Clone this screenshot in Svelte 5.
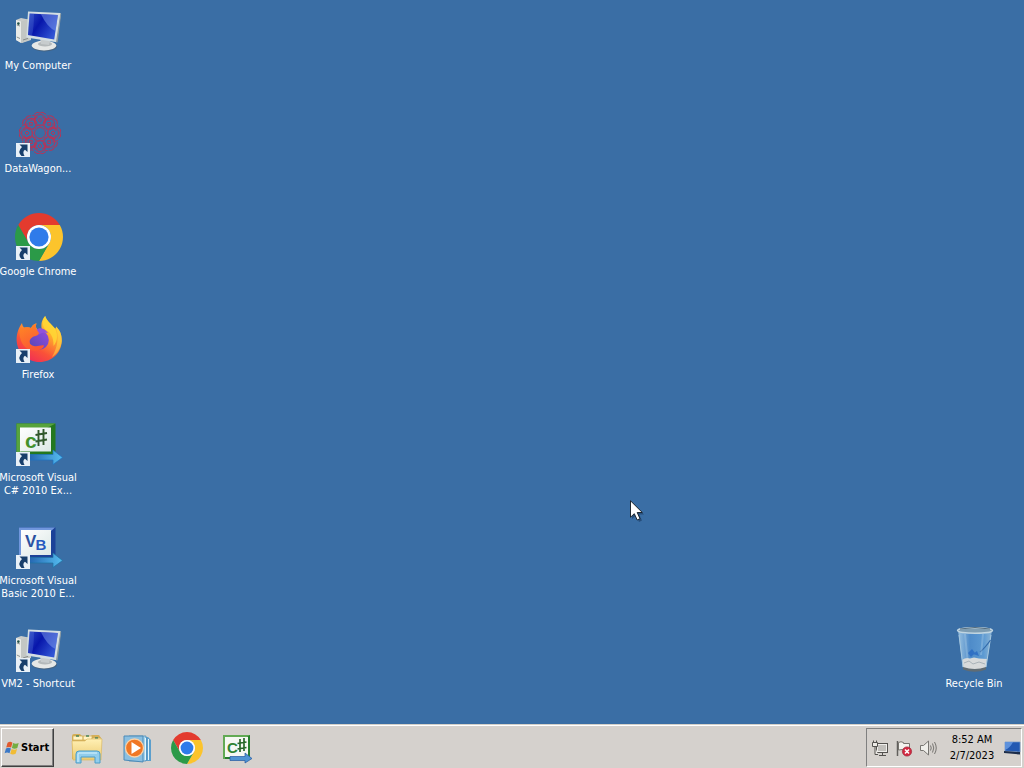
<script>
  const shortcuts = [
    { icon: 'computer', label: ['My Computer'], link: false },
    { icon: 'wagon', label: ['DataWagon...'], link: true },
    { icon: 'chrome', label: ['Google Chrome'], link: true },
    { icon: 'firefox', label: ['Firefox'], link: true },
    { icon: 'csharp', label: ['Microsoft Visual', 'C# 2010 Ex...'], link: true },
    { icon: 'basic', label: ['Microsoft Visual', 'Basic 2010 E...'], link: true },
    { icon: 'computer', label: ['VM2 - Shortcut'], link: true }
  ];
  const bin = { icon: 'bin', label: ['Recycle Bin'], link: false };
  const petals = Array.from({ length: 8 }, (_, i) => i * 45);
</script>

{#snippet chrome()}
  <path fill="#e33b2e" d="M24 12H44.78A24 24 0 0 0 3.22 12L13.61 30A12 12 0 0 1 24 12Z" />
  <path fill="#fcc42c" d="M44.78 12A24 24 0 0 1 24 48L34.39 30A12 12 0 0 0 24 12Z" />
  <path fill="#2b9a48" d="M3.22 12A24 24 0 0 0 24 48L34.39 30A12 12 0 0 1 13.61 30Z" />
  <circle cx="24" cy="24" r="12" fill="#fff" />
  <circle cx="24" cy="24" r="9.6" fill="#2f7bea" />
{/snippet}

{#snippet glyph(name)}
  {#if name === 'computer'}
    <path d="M1 13L6 11L16 13V33L7 36L1 33Z" fill="#c9ccca" />
    <path d="M1 13L6 14.5V36L1 33Z" fill="#e9ebe8" />
    <path d="M6 14.5L14 12V33L6 36Z" fill="#c3c7c4" />
    <path d="M1.8 18L5 19M1.8 30L5 31.5M8 33L13 31.4" stroke="#777d7c" stroke-width=".8" />
    <circle cx="3.4" cy="16.6" r="1.3" fill="#245247" />
    <ellipse cx="29.5" cy="39.5" rx="12.5" ry="5" fill="#4c5c68" opacity=".6" />
    <ellipse cx="29" cy="38.6" rx="12.3" ry="4.8" fill="#e6e8e6" />
    <ellipse cx="30" cy="37" rx="7" ry="2.4" fill="#b4b9ba" />
    <path d="M25 31L35 33L34 38L26 37Z" fill="#c7cccd" />
    <path d="M13 4.6L45.4 6Q46 6.2 45.8 7.2L41.8 35.2L11.4 30.4Z" fill="#d3dee3" />
    <path d="M45.4 6L46.2 7L42.6 35.6L41 35Z" fill="#89989f" />
    <path d="M14.6 6.500L42.9 8L39.2 32.500L13 28Z" fill="url(#screen)" />
    <path d="M26 7.200L42.9 8L40.500 24Q32 20 26 7.200Z" fill="#7f9fee" opacity=".5" />
    <path d="M14.6 6.500L19 6.800Q19 20 17 28.500L13 28Z" fill="#6c8fe5" opacity=".25" />
  {:else if name === 'wagon'}
    <g fill="none" stroke="#cb2b4c" stroke-width="1" opacity=".85">
      <circle cx="25" cy="23" r="5.500" />
      <circle cx="25" cy="23" r="8" stroke-dasharray="3 1" />
      {#each petals as angle}
        <g transform="rotate({angle} 25 23)">
          <path d="M25 16Q17 13 20 7Q25 2 30 7Q33 13 25 16M22 13Q18 9 23 7M28 13Q32 9 27 7" />
          <path d="M19 4.500Q22 1 25 3Q28 1 31 4.500M23 10L25 8L27 10L25 12Z" />
          <path d="M32 5L34 8L31 10" />
        </g>
      {/each}
    </g>
  {:else if name === 'chrome'}
    {@render chrome()}
  {:else if name === 'firefox'}
    <path d="M24.5 46C12 46 2 36.500 1.600 24C1.500 17 4 11.500 7 7C7.300 9.300 8 10.500 9.200 11.700C11.500 10.800 14 11 16 12C18 8.500 20 7.500 21.500 7.500C20.500 9.500 20.800 11.500 22 13L27 14C25.500 8 27 3.500 30.200 0C31.500 5 36 7.500 39.500 12C40.300 12.800 40.900 13 41 10.500C45 14 47 19 46.800 25C46.300 37 37 46 24.5 46Z" fill="url(#fire)" />
    <path d="M30.200 0C31.500 5 36 7.500 39.500 12C43 17 43 25 38.500 30C39 21 35 16 31 14C27 11 27 4 30.200 0Z" fill="#ffda36" opacity=".8" />
    <path d="M41 10.500C45 14 47 19 46.800 25C46 32 42 38 37 41C43 31 44 20 41 10.500Z" fill="#ffdd45" opacity=".5" />
    <circle cx="24" cy="24" r="9.800" fill="url(#globe)" />
    <path d="M21 14C25 10.500 30 13 33 17C29 15.500 26 17 24 18.500Z" fill="#9053db" />
    <path d="M5 13C9 10.500 14 11 16 12C18 8.500 20 7.500 21.500 7.500C20.500 10 20.800 12 22 14L24 17C24 19 21.500 20 18.500 20.500C16.500 22 15 23 14.500 25C14 27.500 16 29.500 19 30C23 31 26 28.500 29 29.500C28 35 17 37 10 31C5 26 4 18 5 13Z" fill="url(#foxhead)" />
  {:else if name === 'csharp'}
    <rect x="1.500" y="4.500" width="39" height="32" fill="#24781f" />
    <path d="M1.500 4.500H40.500L32 9H6V36.500H1.500Z" fill="#57a33c" />
    <rect x="5" y="8.500" width="31" height="24" fill="url(#paper)" />
    <text class="logo" x="10" y="29" font-size="21" fill="#43912b">c</text>
    <path d="M23.500 11V27M28.500 10V26M20.500 16L32 14M20.500 22.500L32 20.500" stroke="#31582c" stroke-width="1.900" />
    <path d="M13 35.500H38V31L47.500 38.500L38 45.500V41H13Z" fill="url(#arrow)" stroke="#1c72c2" stroke-width=".7" />
  {:else if name === 'basic'}
    <rect x="4" y="5.500" width="36.500" height="31" fill="#1c4298" />
    <path d="M4 5.500H40L36 9H7V36.500H4Z" fill="#7197dd" />
    <rect x="6" y="8" width="30" height="25" fill="url(#paper)" />
    <text class="logo" x="10" y="25" font-size="17" fill="#2b519f">V</text>
    <text class="logo" x="20.500" y="28" font-size="15" fill="#2859c0">B</text>
    <path d="M13 35.500H38V31L47.500 38.500L38 45.500V41H13Z" fill="url(#arrow)" stroke="#1c72a2" stroke-width=".7" />
  {:else if name === 'bin'}
    <path d="M7 5L12 43Q23 48.500 35 43L41 5Z" fill="url(#glass)" />
    <path d="M11 35Q15 32 19 33.500L23 32.500L28 33.500L36 34L35 42.500Q24 47 12 42.500Z" fill="#d7dadb" />
    <path d="M13 38L18 36L22 39L28 37L34 39" fill="none" stroke="#a9b3b9" />
    <path d="M12 42Q24 46 35 42V44.500Q24 49 12 44.500Z" fill="#606c74" />
    <path d="M17 28L21 24L24 28L20 32ZM22 29L26 26L28 31Z" fill="#2567c1" opacity=".75" />
    <path d="M8 10L12 42M40 10L35 42" stroke="#a5c7df" stroke-width="1" />
    <path d="M39.500 15Q34 23 29 27" fill="none" stroke="#3269a9" stroke-width="1.200" />
    <path d="M14 9L16.500 34M32 9L30 30" stroke="#b9d7ec" stroke-width="2" opacity=".3" />
    <ellipse cx="24" cy="5.500" rx="17.500" ry="2.800" fill="#7e9db2" stroke="#c0d5e1" stroke-width="1.400" />
    <path d="M9 4Q24 1 39 4" fill="none" stroke="#536b7c" />
  {/if}
{/snippet}

{#snippet shortcut(item)}
  <button class="shortcut">
    <svg class="picture" viewBox="0 0 48 48" aria-hidden="true">
      {@render glyph(item.icon)}
      {#if item.link}
        <rect x="1" y="33" width="14" height="14" fill="#e8f0f7" />
        <path d="M4.500 34.500H12.500V42L10 39.800Q7 41.500 9.500 46H6.500Q2 41.500 7 37Z" fill="#173e6b" />
      {/if}
    </svg>
    <span class="label">
      {#each item.label as line}<span>{line}</span>{/each}
    </span>
  </button>
{/snippet}

<svg class="paints" aria-hidden="true">
  <defs>
    <linearGradient id="screen" x1="0" y1="0" x2="1" y2=".6">
      <stop offset="0" stop-color="#2a48c4" /><stop offset=".45" stop-color="#0716ab" /><stop offset="1" stop-color="#3155d4" />
    </linearGradient>
    <linearGradient id="fire" x1=".85" y1="0" x2=".25" y2="1">
      <stop offset="0" stop-color="#ffe13c" /><stop offset=".35" stop-color="#ffad2d" /><stop offset=".7" stop-color="#fa5238" /><stop offset="1" stop-color="#ee2a5a" />
    </linearGradient>
    <linearGradient id="foxhead" x1="0" y1="0" x2=".5" y2="1">
      <stop offset="0" stop-color="#ff8a24" /><stop offset="1" stop-color="#fb5734" />
    </linearGradient>
    <linearGradient id="globe" x1="1" y1="0" x2="0" y2="1">
      <stop offset="0" stop-color="#944be0" /><stop offset="1" stop-color="#5148b3" />
    </linearGradient>
    <linearGradient id="paper" x1="0" y1="0" x2="1" y2="1">
      <stop offset="0" stop-color="#fff" /><stop offset="1" stop-color="#dce8e6" />
    </linearGradient>
    <linearGradient id="arrow"><stop offset="0" stop-color="#2363ae" /><stop offset="1" stop-color="#55bdf0" /></linearGradient>
    <linearGradient id="glass">
      <stop offset="0" stop-color="#99c1e0" /><stop offset=".35" stop-color="#4e8bc9" /><stop offset=".75" stop-color="#5d9ad2" /><stop offset="1" stop-color="#8db6d7" />
    </linearGradient>
    <linearGradient id="folder" x1="0" y1="0" x2="0" y2="1"><stop offset="0" stop-color="#fff0b4" /><stop offset="1" stop-color="#ecca70" /></linearGradient>
  </defs>
</svg>

<div class="screen">
  <main class="desktop">
    <div class="column">
      {#each shortcuts as item}{@render shortcut(item)}{/each}
    </div>
    <div class="column end">{@render shortcut(bin)}</div>
    <svg class="pointer" viewBox="0 0 14 22" aria-hidden="true">
      <path d="M2 2V19L6 15.500L9 22L12 20.500L9.200 14.500H14Z" fill="#15355a" opacity=".55" />
      <path d="M.5 .8V17.200L4.300 13.700L7.200 20L10 18.700L7.200 12.500H12.300Z" fill="#fff" stroke="#101820" stroke-width=".9" />
    </svg>
  </main>

  <footer class="taskbar">
    <button class="start">
      <svg viewBox="0 0 18 18" aria-hidden="true">
        <path d="M4 3Q7 1 9.500 3L8 8.500Q5.500 7 2.500 8.500Z" fill="#e0592d" />
        <path d="M10.300 3.500Q13 5.200 16.500 3.500L15 9Q12 10.700 8.900 9Z" fill="#75ad42" />
        <path d="M2.200 9.500Q5 8 7.800 9.500L6.200 15Q3.500 13.300 .7 15Z" fill="#3b78c6" />
        <path d="M8.600 10Q11.500 11.700 14.700 10L13.100 15.400Q10 17 7 15.400Z" fill="#f1bc35" />
      </svg>
      <span>Start</span>
    </button>

    <nav class="pinned">
      <button aria-label="Windows Explorer">
        <svg viewBox="0 0 32 32" aria-hidden="true">
          <path d="M1 4Q1 2 3 2H9L11 4H20L21 3H28L30 6V27H1Z" fill="#d5af58" />
          <path d="M2 4H12V8H2ZM12 4H21V8H12ZM21 6H30V10H21Z" fill="#fff3c4" stroke="#cfa951" stroke-width=".7" />
          <path d="M5 4H8M15 4H18M24 6H27" stroke="#46835d" stroke-width="1.400" />
          <path d="M1 9H14L16 7H31L30 28H2Z" fill="url(#folder)" stroke="#dbb963" stroke-width=".7" />
          <path d="M5 31V22Q5 19 8 19H26Q29 19 29 22V31H24V25H10V31Z" fill="#91cdec" stroke="#4b9dc9" />
          <path d="M7 30V22Q7 21 8 21H26" fill="none" stroke="#d7f4ff" />
        </svg>
      </button>
      <button aria-label="Windows Media Player">
        <svg viewBox="0 0 32 32" aria-hidden="true">
          <path d="M9 5H27L30 8V29H10Z" fill="#5c9fcc" />
          <path d="M8 4H25V29H8Z" fill="#a7d5ed" stroke="#4687b4" stroke-width=".7" />
          <path d="M3 4H22V30L3 28Z" fill="#8abfe0" stroke="#4a8ab8" />
          <path d="M24.500 6V28M27.500 7V28" stroke="#e4f5fc" />
          <circle cx="13.500" cy="16" r="9" fill="#f07724" stroke="#fbd2a7" stroke-width="1.300" />
          <path d="M10.500 10V22L20 16Z" fill="#fff" />
        </svg>
      </button>
      <button aria-label="Google Chrome">
        <svg viewBox="0 0 48 48" aria-hidden="true">{@render chrome()}</svg>
      </button>
      <button aria-label="Visual C# 2010 Express">
        <svg viewBox="0 0 32 32" aria-hidden="true">
          <rect x="3" y="4" width="25" height="22" fill="#f5f8f3" stroke="#267e2c" stroke-width="2" />
          <path d="M2 3H29L26 5H4V27H2Z" fill="#62aa54" />
          <text class="logo" x="6" y="21" font-size="15" fill="#2f8433">C</text>
          <path d="M19 7V20M23 6V19M16.500 11.500L25.500 10M16.500 17L25.500 15.500" stroke="#28682a" stroke-width="1.700" />
          <path d="M9 24.500H24V21L31 26.500L24 31V28.500H9Z" fill="#4f94d3" stroke="#2458a0" stroke-width=".7" />
        </svg>
      </button>
    </nav>

    <div class="tray">
      <button aria-label="Network">
        <svg viewBox="0 0 18 18" aria-hidden="true">
          <rect x="5.500" y="4.500" width="11" height="9" fill="#c1bfbb" stroke="#54524f" />
          <rect x="6.500" y="5.500" width="9" height="7" fill="none" stroke="#eeedea" />
          <path d="M8 16.500H15M11.500 14V16" stroke="#54524f" />
          <path d="M1.500 3.500H6.500V7.500H1.500ZM4 7.500V15.500H7M2.500 1.500V3M5.500 1.500V3" fill="#eceae6" stroke="#54524f" />
        </svg>
      </button>
      <button aria-label="Action Center">
        <svg viewBox="0 0 18 18" aria-hidden="true">
          <path d="M2.500 2V17" stroke="#62605d" stroke-width="1.500" />
          <path d="M3.500 3.500Q6 2 8.500 3.500V4.500H14.500V11.500H8.500L7.500 10.500L3.500 11Z" fill="#f3f2ee" stroke="#76736e" />
          <circle cx="12" cy="12.500" r="4.600" fill="#d32840" stroke="#9e2639" stroke-width=".7" />
          <path d="M10 10.500L14 14.500M14 10.500L10 14.500" stroke="#fff" stroke-width="1.600" />
        </svg>
      </button>
      <button aria-label="Volume">
        <svg viewBox="0 0 18 18" aria-hidden="true">
          <path d="M1.500 6.500H4.500L9.500 2V16L4.500 11.500H1.500Z" fill="#efeeea" stroke="#777571" />
          <path d="M11.500 6.500Q13 9 11.500 11.500M13.500 4.500Q16 9 13.500 13.500M15.500 3Q19 9 15.500 15" fill="none" stroke="#777571" />
        </svg>
      </button>
      <time class="clock" datetime="2023-02-07T08:52"><span>8:52 AM</span><span>2/7/2023</span></time>
      <button class="peek" aria-label="Show desktop">
        <svg viewBox="0 0 18 18" aria-hidden="true">
          <path d="M2 3H17V13L2 12Z" fill="#2359b2" stroke="#7195c8" stroke-width=".7" />
          <path d="M2 3H10Q7 9 2 11Z" fill="#5d91dc" />
          <path d="M1 12L17 13V15.500L1 14Z" fill="#1c2c49" />
        </svg>
      </button>
    </div>
  </footer>
</div>

<style>
  :global(body) { margin: 0; }
  .screen {
    display: flex;
    flex-direction: column;
    min-height: 100vh;
    background: #3a6ea5;
    font: 11px/13px "DejaVu Sans Condensed", "DejaVu Sans", sans-serif;
    font-stretch: condensed;
  }
  .paints { position: absolute; width: 0; height: 0; }
  button { padding: 0; border: 0; background: none; color: inherit; font: inherit; }
  .desktop {
    position: relative;
    display: flex;
    flex: 1;
    justify-content: space-between;
    padding-right: 12px;
    color: #fff;
  }
  .column { display: flex; flex-direction: column; }
  .end { justify-content: flex-end; padding-bottom: 3px; }
  .shortcut {
    display: flex;
    flex-direction: column;
    width: 76px;
    height: 103px;
    padding-top: 7px;
  }
  .picture { width: 48px; height: 48px; margin-left: 15px; flex: none; }
  .label {
    display: flex;
    flex-direction: column;
    align-items: center;
    align-self: stretch;
    padding-top: 4px;
    white-space: nowrap;
  }
  .logo { font-family: "Liberation Sans", sans-serif; font-weight: bold; }
  .pointer { position: absolute; left: 630px; top: 500px; width: 14px; height: 22px; }
  .taskbar {
    display: flex;
    box-sizing: border-box;
    height: 44px;
    padding: 3px 2px 1px 1px;
    border-top: 1px solid #d4d0c8;
    box-shadow: inset 0 1px #fff;
    background: #d5d1cd;
    color: #000;
  }
  .start {
    display: flex;
    align-items: center;
    width: 53px;
    padding-left: 2px;
    gap: 1px;
    border: 1px solid;
    border-color: #fff #404040 #404040 #fff;
    box-shadow: inset -1px -1px #808080;
    font-weight: bold;
  }
  .start svg { width: 16px; height: 16px; }
  .pinned { display: flex; margin-left: 8px; }
  .pinned button { display: grid; place-items: center; width: 50px; }
  .pinned svg { width: 32px; height: 32px; }
  .tray {
    display: flex;
    align-items: center;
    margin-left: auto;
    padding-left: 1px;
    border: 1px solid;
    border-color: #808080 #fff #fff #808080;
  }
  .tray button { display: grid; place-items: center; width: 24px; }
  .tray svg { width: 18px; height: 18px; }
  .clock {
    display: flex;
    flex-direction: column;
    align-items: center;
    width: 60px;
    margin-left: 2px;
    padding-right: 1px;
    line-height: 16px;
  }
  .tray .peek { width: 18px; }
</style>
